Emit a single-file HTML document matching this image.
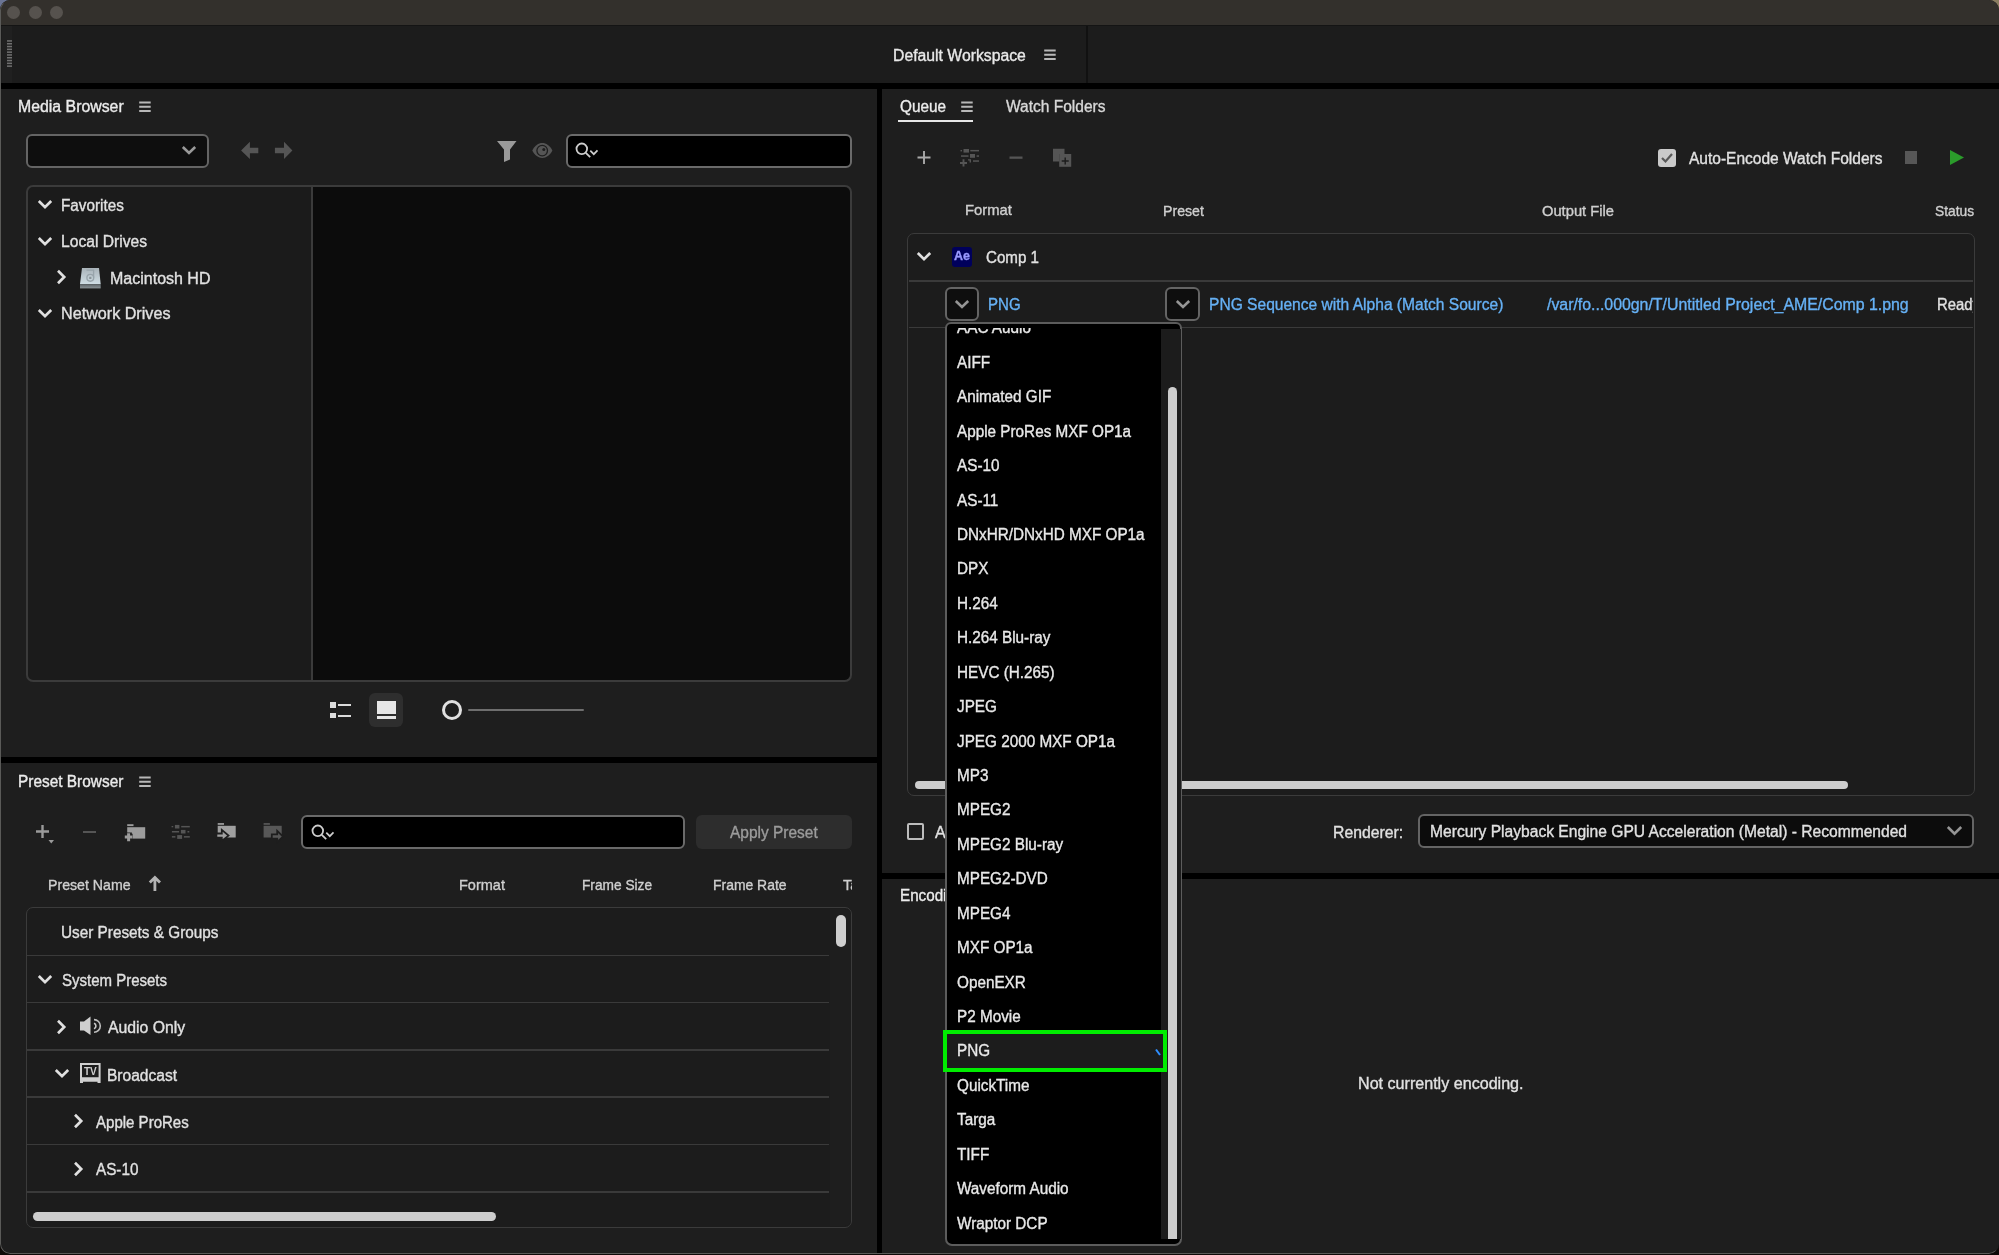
<!DOCTYPE html>
<html><head><meta charset="utf-8"><style>
html,body{margin:0;padding:0;width:1999px;height:1255px;overflow:hidden;background:#0e0a08;}
body{position:relative;font-family:"Liberation Sans",sans-serif;}
div,span,svg{position:absolute;}
span{white-space:nowrap;line-height:normal;transform-origin:0 0;-webkit-text-stroke:0.35px currentColor;}
#root{left:0;top:0;width:1999px;height:1254px;will-change:transform;border-radius:10px;overflow:hidden;}
</style></head><body>
<div style="left:0;top:0;width:12px;height:12px;background:#6a7494;"></div><div style="left:1987px;top:0;width:12px;height:12px;background:#8a7d60;"></div><div id="root">
<div style="left:0px;top:0px;width:1999px;height:1255px;background:#1e1e1e;"></div>
<div style="left:0px;top:0px;width:1999px;height:25px;background:#33302c;"></div>
<div style="left:0px;top:25px;width:1999px;height:1px;background:#141414;"></div>
<div style="left:7.0px;top:5.5px;width:13px;height:13px;border-radius:50%;background:#56524e;"></div>
<div style="left:28.5px;top:5.5px;width:13px;height:13px;border-radius:50%;background:#56524e;"></div>
<div style="left:50.0px;top:5.5px;width:13px;height:13px;border-radius:50%;background:#56524e;"></div>
<div style="left:0px;top:26px;width:1999px;height:57px;background:#1c1c1c;"></div>
<div style="left:2px;top:26px;width:10px;height:57px;background:#202020;"></div>
<svg style="left:6px;top:39px;" width="7" height="30" viewBox="0 0 7 30"><rect x="1" y="1.20" width="5" height="1.5" fill="#707070"/><rect x="1" y="4.00" width="5" height="1.5" fill="#707070"/><rect x="1" y="6.80" width="5" height="1.5" fill="#707070"/><rect x="1" y="9.60" width="5" height="1.5" fill="#707070"/><rect x="1" y="12.40" width="5" height="1.5" fill="#707070"/><rect x="1" y="15.20" width="5" height="1.5" fill="#707070"/><rect x="1" y="18.00" width="5" height="1.5" fill="#707070"/><rect x="1" y="20.80" width="5" height="1.5" fill="#707070"/><rect x="1" y="23.60" width="5" height="1.5" fill="#707070"/><rect x="1" y="26.40" width="5" height="1.5" fill="#707070"/></svg>
<span id="t1" style="left:893.0px;top:46.82px;font-size:16px;color:#e8e8e8;transform:scaleX(0.9851);">Default Workspace</span>
<svg style="left:1043px;top:48px;" width="14" height="14" viewBox="0 0 14 14"><path d="M1.2 2.6H12.7M1.2 6.85H12.7M1.2 11.1H12.7" stroke="#b8b8b8" stroke-width="2"/></svg>
<div style="left:1086px;top:26px;width:2px;height:57px;background:#111;"></div>
<div style="left:0px;top:83px;width:1999px;height:6px;background:#000;"></div>
<div style="left:877px;top:83px;width:5px;height:1170px;background:#000;"></div>
<div style="left:0px;top:757px;width:877px;height:6px;background:#000;"></div>
<div style="left:882px;top:873px;width:1117px;height:6px;background:#000;"></div>
<div style="left:0;top:0;width:1999px;height:1254px;box-sizing:border-box;border:1.5px solid #5a5a58;border-top-color:transparent;border-right-color:transparent;border-radius:10px;"></div>
<span id="t2" style="left:18.0px;top:98.22px;font-size:16px;color:#ececec;transform:scaleX(0.9906);">Media Browser</span>
<svg style="left:138px;top:100px;" width="14" height="13" viewBox="0 0 14 13"><path d="M1.2 2.6H12.7M1.2 6.85H12.7M1.2 11.1H12.7" stroke="#b8b8b8" stroke-width="2"/></svg>
<div style="left:26px;top:134px;width:183px;height:34px;box-sizing:border-box;border:2px solid #646464;border-radius:6px;background:#0e0e0e;"></div>
<svg style="left:181px;top:145px;" width="16" height="11" viewBox="0 0 16 11"><path d="M1.8 2L8 8L14.2 2" fill="none" stroke="#999" stroke-width="2.6"/></svg>
<svg style="left:235px;top:138px;" width="62" height="24" viewBox="235 138 62 24"><path d="M241.1 150.5L249.9 141.8V147.7H258.3V153.2H249.9V159Z M292.4 150.5L284 141.8V147.7H274.9V153.2H284V159Z" fill="#555"/></svg>
<svg style="left:496px;top:140px;" width="21" height="23" viewBox="0 0 21 23"><path d="M1 1H20.5L14 9.5V19.5L8 22V9.5Z" fill="#9a9a9a"/></svg>
<svg style="left:530px;top:140px;" width="26" height="22" viewBox="0 0 26 22"><path d="M2.3 10.6C7 0.6 17.5 0.6 22.4 10.6C17.5 20.4 7 20.4 2.3 10.6Z" fill="#555"/><circle cx="12.2" cy="10.6" r="5.3" fill="none" stroke="#1e1e1e" stroke-width="1.3"/><circle cx="13.8" cy="9.6" r="1.5" fill="#1e1e1e"/></svg>
<div style="left:565.5px;top:134px;width:286.5px;height:34px;box-sizing:border-box;border:2px solid #6a6a6a;border-radius:6px;background:#000;"></div>
<svg style="left:575px;top:142px;" width="25" height="18" viewBox="0 0 25 18"><circle cx="6.8" cy="6.8" r="5.3" fill="none" stroke="#cdcdcd" stroke-width="1.8"/><path d="M10.8 10.8L15.2 15.2" stroke="#cdcdcd" stroke-width="1.8"/><path d="M15.3 8.6L18.8 12.2L22.5 8.4" fill="none" stroke="#cdcdcd" stroke-width="1.7"/></svg>
<div style="left:25.5px;top:185px;width:826.5px;height:497px;box-sizing:border-box;border:2px solid #3b3b3b;border-radius:7px;background:#1b1b1b;overflow:hidden;"></div>
<div style="left:312px;top:187px;width:538px;height:493px;background:#0c0c0c;border-radius:0 6px 6px 0;"></div>
<div style="left:311px;top:186px;width:1.5px;height:494px;background:#3b3b3b;"></div>
<svg style="left:36.5px;top:199px;" width="16" height="11" viewBox="0 0 16 11"><path d="M1.8 2L8 8.2L14.2 2" fill="none" stroke="#e0e0e0" stroke-width="2.7"/></svg>
<span id="t3" style="left:61.0px;top:196.52px;font-size:16px;color:#e1e1e1;transform:scaleX(0.9538);">Favorites</span>
<svg style="left:36.5px;top:236px;" width="16" height="11" viewBox="0 0 16 11"><path d="M1.8 2L8 8.2L14.2 2" fill="none" stroke="#e0e0e0" stroke-width="2.7"/></svg>
<span id="t4" style="left:61.0px;top:233.22px;font-size:16px;color:#e1e1e1;transform:scaleX(0.9770);">Local Drives</span>
<svg style="left:56px;top:269px;" width="11" height="16" viewBox="0 0 11 16"><path d="M2 1.8L8.2 8L2 14.2" fill="none" stroke="#e0e0e0" stroke-width="2.7"/></svg>
<svg style="left:78px;top:265px;" width="25" height="26" viewBox="0 0 25 26"><defs><linearGradient id="hd" x1="0" y1="0" x2="0" y2="1"><stop offset="0" stop-color="#a9b3b9"/><stop offset="1" stop-color="#cfdde4"/></linearGradient><linearGradient id="hb" x1="0" y1="0" x2="0" y2="1"><stop offset="0" stop-color="#5d6468"/><stop offset="1" stop-color="#8a9296"/></linearGradient></defs><path d="M4 3H21L22.7 19.2H2Z" fill="url(#hd)"/><rect x="2" y="19.2" width="20.7" height="4.2" fill="url(#hb)"/><circle cx="12.3" cy="12.8" r="3.4" fill="none" stroke="#98a4ab" stroke-width="1.4"/><path d="M15.6 12.5V5.2H8.5M14.8 5.2" fill="none" stroke="#98a4ab" stroke-width="1.3"/><rect x="11.2" y="11.8" width="2.2" height="2.2" fill="#8a949a"/></svg>
<span id="t5" style="left:110.0px;top:269.52px;font-size:16px;color:#e1e1e1;transform:scaleX(1.0000);">Macintosh HD</span>
<svg style="left:36.5px;top:308px;" width="16" height="11" viewBox="0 0 16 11"><path d="M1.8 2L8 8.2L14.2 2" fill="none" stroke="#e0e0e0" stroke-width="2.7"/></svg>
<span id="t6" style="left:61.0px;top:305.12px;font-size:16px;color:#e1e1e1;transform:scaleX(1.0093);">Network Drives</span>
<div style="left:330px;top:702px;width:5.5px;height:5.5px;background:#dcdcdc;"></div>
<div style="left:337.5px;top:704px;width:13.5px;height:2.3px;background:#dcdcdc;"></div>
<div style="left:330px;top:712.5px;width:5.5px;height:5.5px;background:#dcdcdc;"></div>
<div style="left:337.5px;top:714.5px;width:13.5px;height:2.3px;background:#dcdcdc;"></div>
<div style="left:369px;top:693px;width:34px;height:34px;background:#2e2e2e;border-radius:6px;"></div>
<div style="left:377px;top:701px;width:18.5px;height:13px;background:#e6e6e6;"></div>
<div style="left:377px;top:716.3px;width:18.5px;height:3.2px;background:#e6e6e6;"></div>
<div style="left:442px;top:700px;width:20px;height:20px;box-sizing:border-box;border:3px solid #e0e0e0;border-radius:50%;"></div>
<div style="left:467.5px;top:709px;width:116.5px;height:2.4px;background:#6e6e6e;border-radius:1px;"></div>
<span id="t7" style="left:18.0px;top:773.02px;font-size:16px;color:#ececec;transform:scaleX(0.9633);">Preset Browser</span>
<svg style="left:138px;top:775px;" width="14" height="13" viewBox="0 0 14 13"><path d="M1.2 2.6H12.7M1.2 6.85H12.7M1.2 11.1H12.7" stroke="#b8b8b8" stroke-width="2"/></svg>
<svg style="left:35px;top:824px;" width="20" height="21" viewBox="0 0 20 21"><path d="M7.5 1V14M1 7.5H14" stroke="#9a9a9a" stroke-width="2.4"/><path d="M13.5 16H19L16.25 19.5Z" fill="#9a9a9a"/></svg>
<div style="left:82.5px;top:831px;width:13px;height:2.4px;background:#555;"></div>
<svg style="left:115px;top:815px;" width="180" height="35" viewBox="115 815 180 35"><g fill="#9c9c9c"><rect x="127.2" y="824.2" width="6.3" height="1.9"/><rect x="127.2" y="827.2" width="18" height="11.4"/></g><path d="M128.6 832.6V841.4M124.6 837H132.6" stroke="#1e1e1e" stroke-width="6.5"/><path d="M128.6 833.2V841.2M124.8 837H132.4" stroke="#9c9c9c" stroke-width="3"/><g fill="#555"><rect x="171.6" y="826" width="1.6" height="1.3"/><rect x="174.9" y="824.9" width="4.5" height="3.6"/><rect x="181.2" y="825.9" width="8.6" height="1.5"/><rect x="171.9" y="831" width="7.2" height="1.5"/><rect x="180.9" y="829.9" width="4.6" height="3.6"/><rect x="187.5" y="831" width="1.8" height="1.5"/><rect x="171.9" y="836.1" width="3.5" height="1.5"/><rect x="177.2" y="835.1" width="4.9" height="3.8"/><rect x="183.9" y="836.1" width="5.9" height="1.5"/></g><g fill="#a0a0a0"><rect x="217.7" y="823.1" width="6.3" height="1.7"/><rect x="217.7" y="825.8" width="18" height="11.7"/></g><path d="M216.4 833.5H221.8V829.9L228.5 835.6L221.8 841V837.6H216.4Z" fill="#a0a0a0" stroke="#1e1e1e" stroke-width="1.8" stroke-linejoin="miter"/><g fill="#585858"><rect x="263.6" y="823.1" width="6.3" height="1.7"/><rect x="263.6" y="825.8" width="18.1" height="11.7"/></g><path d="M271.8 834.4H277.2V830.8L283 836.6L277.2 842V838.6H271.8Z" fill="#585858" stroke="#1e1e1e" stroke-width="1.8"/></svg>
<div style="left:301px;top:815px;width:383.5px;height:34px;box-sizing:border-box;border:2px solid #6a6a6a;border-radius:6px;background:#000;"></div>
<svg style="left:311px;top:823.8px;" width="25" height="18" viewBox="0 0 25 18"><circle cx="6.8" cy="6.8" r="5.3" fill="none" stroke="#cdcdcd" stroke-width="1.8"/><path d="M10.8 10.8L15.2 15.2" stroke="#cdcdcd" stroke-width="1.8"/><path d="M15.3 8.6L18.8 12.2L22.5 8.4" fill="none" stroke="#cdcdcd" stroke-width="1.7"/></svg>
<div style="left:696px;top:815px;width:156px;height:34px;background:#2d2d2d;border-radius:6px;"></div>
<span id="t8" style="left:730.0px;top:823.52px;font-size:16px;color:#9c9c9c;transform:scaleX(0.9670);">Apply Preset</span>
<span id="t9" style="left:48.0px;top:877.28px;font-size:14.5px;color:#cfcfcf;transform:scaleX(0.9759);">Preset Name</span>
<svg style="left:147px;top:874px;" width="15" height="18" viewBox="0 0 15 18"><path d="M7.9 17V4M2.8 8.6L7.9 3.5L13 8.6" fill="none" stroke="#b4b4b4" stroke-width="2.8"/></svg>
<span id="t10" style="left:459.0px;top:877.28px;font-size:14.5px;color:#cfcfcf;transform:scaleX(1.0000);">Format</span>
<span id="t11" style="left:582.1px;top:877.28px;font-size:14.5px;color:#cfcfcf;transform:scaleX(0.9452);">Frame Size</span>
<span id="t12" style="left:713.0px;top:877.28px;font-size:14.5px;color:#cfcfcf;transform:scaleX(0.9600);">Frame Rate</span>
<div style="left:840px;top:870px;width:12px;height:26px;overflow:hidden;"><span style="left:3px;top:7.28px;font-size:14.5px;color:#cfcfcf;">Ta</span></div>
<div style="left:25.5px;top:907px;width:826.5px;height:321px;box-sizing:border-box;border:1.5px solid #3b3b3b;border-radius:7px;background:#1c1c1c;"></div>
<div style="left:829.5px;top:908.5px;width:21px;height:317px;background:#1e1e1e;border-radius:0 6px 6px 0;"></div>
<div style="left:836px;top:914.5px;width:9.5px;height:32px;background:#cfcfcf;border-radius:5px;"></div>
<div style="left:27px;top:954.5px;width:801.5px;height:1.5px;background:#3a3a3a;"></div>
<div style="left:27px;top:1001.5px;width:801.5px;height:1.5px;background:#3a3a3a;"></div>
<div style="left:27px;top:1049px;width:801.5px;height:1.5px;background:#3a3a3a;"></div>
<div style="left:27px;top:1096px;width:801.5px;height:1.5px;background:#3a3a3a;"></div>
<div style="left:27px;top:1143.5px;width:801.5px;height:1.5px;background:#3a3a3a;"></div>
<div style="left:27px;top:1191px;width:801.5px;height:1.5px;background:#3a3a3a;"></div>
<span id="t13" style="left:61.0px;top:923.52px;font-size:16px;color:#e1e1e1;transform:scaleX(0.9571);">User Presets &amp; Groups</span>
<svg style="left:36.5px;top:974px;" width="16" height="11" viewBox="0 0 16 11"><path d="M1.8 2L8 8.2L14.2 2" fill="none" stroke="#e0e0e0" stroke-width="2.7"/></svg>
<span id="t14" style="left:62.0px;top:971.52px;font-size:16px;color:#e1e1e1;transform:scaleX(0.9375);">System Presets</span>
<svg style="left:56px;top:1018.5px;" width="11" height="16" viewBox="0 0 11 16"><path d="M2 1.8L8.2 8L2 14.2" fill="none" stroke="#e0e0e0" stroke-width="2.7"/></svg>
<svg style="left:78px;top:1015px;" width="24" height="22" viewBox="0 0 24 22"><path d="M2 6.5H6L12.5 1.5V20L6 15.5H2Z" fill="#cfcfcf"/><path d="M16 8.2A3 3 0 0 1 16 13.8" fill="none" stroke="#c8c8c8" stroke-width="1.6"/><path d="M16 4.6A6.3 6.3 0 0 1 16 17.2" fill="none" stroke="#bdbdbd" stroke-width="1.6"/></svg>
<span id="t15" style="left:108.0px;top:1019.32px;font-size:16px;color:#e1e1e1;transform:scaleX(0.9873);">Audio Only</span>
<svg style="left:53.5px;top:1068px;" width="16" height="11" viewBox="0 0 16 11"><path d="M1.8 2L8 8.2L14.2 2" fill="none" stroke="#e0e0e0" stroke-width="2.7"/></svg>
<svg style="left:79px;top:1062px;" width="23" height="22" viewBox="0 0 23 22"><path fill-rule="evenodd" d="M1 1H21.6V21H18.5V19.8H4V21H1ZM3 3V15.3H19.6V3Z" fill="#cfcfcf"/><text x="11.3" y="13.2" text-anchor="middle" font-family="Liberation Sans" font-weight="bold" font-size="10" fill="#cfcfcf">TV</text></svg>
<span id="t16" style="left:107.0px;top:1066.52px;font-size:16px;color:#e1e1e1;transform:scaleX(0.9718);">Broadcast</span>
<svg style="left:73px;top:1113px;" width="11" height="16" viewBox="0 0 11 16"><path d="M2 1.8L8.2 8L2 14.2" fill="none" stroke="#e0e0e0" stroke-width="2.7"/></svg>
<span id="t17" style="left:96.0px;top:1113.92px;font-size:16px;color:#e1e1e1;transform:scaleX(0.9394);">Apple ProRes</span>
<svg style="left:73px;top:1160.5px;" width="11" height="16" viewBox="0 0 11 16"><path d="M2 1.8L8.2 8L2 14.2" fill="none" stroke="#e0e0e0" stroke-width="2.7"/></svg>
<span id="t18" style="left:96.0px;top:1161.02px;font-size:16px;color:#e1e1e1;transform:scaleX(0.9545);">AS-10</span>
<div style="left:33px;top:1212px;width:463px;height:9px;background:#cdcdcd;border-radius:5px;"></div>
<span id="t19" style="left:900.0px;top:98.02px;font-size:16px;color:#ececec;transform:scaleX(0.9583);">Queue</span>
<svg style="left:960px;top:100px;" width="14" height="13" viewBox="0 0 14 13"><path d="M1.2 2.6H12.7M1.2 6.85H12.7M1.2 11.1H12.7" stroke="#b8b8b8" stroke-width="2"/></svg>
<div style="left:898px;top:120px;width:75px;height:2.2px;background:#e6e6e6;"></div>
<span id="t20" style="left:1006.0px;top:98.02px;font-size:16px;color:#d8d8d8;transform:scaleX(0.9706);">Watch Folders</span>
<svg style="left:905px;top:140px;" width="180" height="30" viewBox="905 140 180 30"><path d="M917.5 157.5H930.5M924 151V164" stroke="#a9a9a9" stroke-width="1.9"/><g fill="#555"><rect x="960.5" y="150" width="1.5" height="1.4"/><rect x="963.5" y="149" width="5.5" height="3.6"/><rect x="970.3" y="149.9" width="8.7" height="1.5"/><rect x="961" y="155.3" width="7.5" height="1.5"/><rect x="970" y="154" width="5" height="3.8"/><rect x="976.6" y="155.3" width="2.4" height="1.5"/><rect x="973" y="160.3" width="6" height="1.5"/><path d="M968 159.2H971V162.5H969.6V160.6H968Z"/></g><path d="M963.5 159.3V166.5M960 163H967" stroke="#555" stroke-width="1.9"/><rect x="1009.5" y="156.5" width="13" height="2.3" fill="#555"/><path d="M1053 148.7H1064.5V154H1059.2V161.6H1053Z" fill="#555"/><rect x="1059.2" y="154" width="12" height="12.8" fill="#555"/><path d="M1065.2 157.5V164.5M1061.7 161H1068.7" stroke="#1c1c1c" stroke-width="1.4"/></svg>
<div style="left:1658px;top:149px;width:18px;height:18px;background:#cacaca;border-radius:3px;"></div>
<svg style="left:1658px;top:149px;" width="18" height="18" viewBox="0 0 18 18"><path d="M4 9L7.5 12.5L14 5" fill="none" stroke="#585858" stroke-width="2.2"/></svg>
<span id="t21" style="left:1689.0px;top:150.12px;font-size:16px;color:#e1e1e1;transform:scaleX(0.9698);">Auto-Encode Watch Folders</span>
<div style="left:1904.5px;top:151px;width:12.5px;height:12.5px;background:#575757;"></div>
<svg style="left:1949px;top:149px;" width="16" height="17" viewBox="0 0 16 17"><path d="M1 1L15 8.5L1 16Z" fill="#2b9b2b"/></svg>
<span id="t22" style="left:965.0px;top:202.48px;font-size:14.5px;color:#cfcfcf;transform:scaleX(1.0222);">Format</span>
<span id="t23" style="left:1163.0px;top:202.88px;font-size:14.5px;color:#cfcfcf;transform:scaleX(0.9756);">Preset</span>
<span id="t24" style="left:1542.0px;top:202.88px;font-size:14.5px;color:#cfcfcf;transform:scaleX(1.0141);">Output File</span>
<span id="t25" style="left:1935.0px;top:202.88px;font-size:14.5px;color:#cfcfcf;transform:scaleX(0.9512);">Status</span>
<div style="left:907px;top:232.5px;width:1067.5px;height:563px;box-sizing:border-box;border:1.5px solid #3b3b3b;border-radius:7px;background:#1c1c1c;"></div>
<div style="left:908.5px;top:280px;width:1064.5px;height:1.5px;background:#3a3a3a;"></div>
<div style="left:908.5px;top:326.5px;width:1064.5px;height:1.5px;background:#3a3a3a;"></div>
<svg style="left:916px;top:251px;" width="16" height="11" viewBox="0 0 16 11"><path d="M1.8 2L8 8.2L14.2 2" fill="none" stroke="#e0e0e0" stroke-width="2.7"/></svg>
<div style="left:951.5px;top:246.5px;width:20px;height:20px;background:#00005b;border-radius:3px;"></div>
<span style="left:952px;top:247px;width:20px;text-align:center;font-size:12.5px;line-height:19px;font-weight:bold;color:#9999ff;">Ae</span>
<span id="t26" style="left:986.0px;top:248.82px;font-size:16px;color:#e1e1e1;transform:scaleX(0.9464);">Comp 1</span>
<div style="left:944.5px;top:287px;width:34.5px;height:34px;box-sizing:border-box;border:2px solid #646464;border-radius:6px;background:#0e0e0e;"></div>
<svg style="left:953.5px;top:299px;" width="16" height="11" viewBox="0 0 16 11"><path d="M1.8 2L8 8L14.2 2" fill="none" stroke="#959595" stroke-width="2.6"/></svg>
<span id="t27" style="left:988.1px;top:295.52px;font-size:16px;color:#66b1f5;transform:scaleX(0.9394);">PNG</span>
<div style="left:1165px;top:287px;width:35px;height:34px;box-sizing:border-box;border:2px solid #646464;border-radius:6px;background:#0e0e0e;"></div>
<svg style="left:1174.5px;top:299px;" width="16" height="11" viewBox="0 0 16 11"><path d="M1.8 2L8 8L14.2 2" fill="none" stroke="#959595" stroke-width="2.6"/></svg>
<span id="t28" style="left:1209.0px;top:295.52px;font-size:16px;color:#66b1f5;transform:scaleX(0.9734);">PNG Sequence with Alpha (Match Source)</span>
<span id="t29" style="left:1547.0px;top:295.82px;font-size:16px;color:#66b1f5;transform:scaleX(0.9918);">/var/fo...000gn/T/Untitled Project_AME/Comp 1.png</span>
<div style="left:1930px;top:290px;width:43px;height:30px;overflow:hidden;"><span style="left:7px;top:5.82px;font-size:16px;color:#e1e1e1;transform:scaleX(0.93);">Ready</span></div>
<div style="left:915px;top:781px;width:932.5px;height:8px;background:#cdcdcd;border-radius:4px;"></div>
<div style="left:907px;top:822.5px;width:17px;height:17px;box-sizing:border-box;border:2px solid #bdbdbd;border-radius:2px;"></div>
<span id="t30" style="left:935px;top:824.12px;font-size:16px;color:#e1e1e1;">Auto</span>
<span id="t31" style="left:1333.0px;top:824.12px;font-size:16px;color:#e1e1e1;transform:scaleX(0.9855);">Renderer:</span>
<div style="left:1418px;top:814px;width:556px;height:33.5px;box-sizing:border-box;border:2px solid #646464;border-radius:6px;background:#0c0c0c;"></div>
<span id="t32" style="left:1430.0px;top:823.22px;font-size:16px;color:#e1e1e1;transform:scaleX(0.9754);">Mercury Playback Engine GPU Acceleration (Metal) - Recommended</span>
<svg style="left:1946px;top:825px;" width="17" height="11" viewBox="0 0 17 11"><path d="M1.8 2L8.5 8.7L15.2 2" fill="none" stroke="#959595" stroke-width="2.6"/></svg>
<span id="t33" style="left:900px;top:887.32px;font-size:16px;color:#ececec;transform:scaleX(0.95);">Encoding</span>
<span id="t34" style="left:1358.0px;top:1074.52px;font-size:16px;color:#e1e1e1;transform:scaleX(1.0061);">Not currently encoding.</span>
<div style="left:944.5px;top:322px;width:237.5px;height:924px;box-sizing:border-box;border:2px solid #5c5c5c;border-radius:0 0 7px 7px;background:#000;border-top-left-radius:6px;border-top-right-radius:6px;"></div>
<div style="left:1161px;top:329px;width:20px;height:910px;background:#1c1c1c;"></div>
<div style="left:1168px;top:387px;width:9px;height:852px;background:#cdcdcd;border-radius:4.5px 4.5px 0 0;"></div>
<div style="left:946.5px;top:328px;width:214.5px;height:914px;overflow:hidden;">
<span style="left:10.5px;top:-8.58px;font-size:16px;color:#e8e8e8;transform:scaleX(0.955);">AAC Audio</span>
<span style="left:10.5px;top:25.85px;font-size:16px;color:#e8e8e8;transform:scaleX(0.955);">AIFF</span>
<span style="left:10.5px;top:60.28px;font-size:16px;color:#e8e8e8;transform:scaleX(0.955);">Animated GIF</span>
<span style="left:10.5px;top:94.71px;font-size:16px;color:#e8e8e8;transform:scaleX(0.955);">Apple ProRes MXF OP1a</span>
<span style="left:10.5px;top:129.14px;font-size:16px;color:#e8e8e8;transform:scaleX(0.955);">AS-10</span>
<span style="left:10.5px;top:163.57px;font-size:16px;color:#e8e8e8;transform:scaleX(0.955);">AS-11</span>
<span style="left:10.5px;top:198.00px;font-size:16px;color:#e8e8e8;transform:scaleX(0.955);">DNxHR/DNxHD MXF OP1a</span>
<span style="left:10.5px;top:232.43px;font-size:16px;color:#e8e8e8;transform:scaleX(0.955);">DPX</span>
<span style="left:10.5px;top:266.86px;font-size:16px;color:#e8e8e8;transform:scaleX(0.955);">H.264</span>
<span style="left:10.5px;top:301.29px;font-size:16px;color:#e8e8e8;transform:scaleX(0.955);">H.264 Blu-ray</span>
<span style="left:10.5px;top:335.72px;font-size:16px;color:#e8e8e8;transform:scaleX(0.955);">HEVC (H.265)</span>
<span style="left:10.5px;top:370.15px;font-size:16px;color:#e8e8e8;transform:scaleX(0.955);">JPEG</span>
<span style="left:10.5px;top:404.58px;font-size:16px;color:#e8e8e8;transform:scaleX(0.955);">JPEG 2000 MXF OP1a</span>
<span style="left:10.5px;top:439.01px;font-size:16px;color:#e8e8e8;transform:scaleX(0.955);">MP3</span>
<span style="left:10.5px;top:473.44px;font-size:16px;color:#e8e8e8;transform:scaleX(0.955);">MPEG2</span>
<span style="left:10.5px;top:507.87px;font-size:16px;color:#e8e8e8;transform:scaleX(0.955);">MPEG2 Blu-ray</span>
<span style="left:10.5px;top:542.30px;font-size:16px;color:#e8e8e8;transform:scaleX(0.955);">MPEG2-DVD</span>
<span style="left:10.5px;top:576.73px;font-size:16px;color:#e8e8e8;transform:scaleX(0.955);">MPEG4</span>
<span style="left:10.5px;top:611.16px;font-size:16px;color:#e8e8e8;transform:scaleX(0.955);">MXF OP1a</span>
<span style="left:10.5px;top:645.59px;font-size:16px;color:#e8e8e8;transform:scaleX(0.955);">OpenEXR</span>
<span style="left:10.5px;top:680.02px;font-size:16px;color:#e8e8e8;transform:scaleX(0.955);">P2 Movie</span>
<div style="left:0px;top:702.5px;width:221px;height:41.5px;background:#1c1c1c;"></div>
<span style="left:10.5px;top:714.45px;font-size:16px;color:#e8e8e8;transform:scaleX(0.955);">PNG</span>
<span style="left:10.5px;top:748.88px;font-size:16px;color:#e8e8e8;transform:scaleX(0.955);">QuickTime</span>
<span style="left:10.5px;top:783.31px;font-size:16px;color:#e8e8e8;transform:scaleX(0.955);">Targa</span>
<span style="left:10.5px;top:817.74px;font-size:16px;color:#e8e8e8;transform:scaleX(0.955);">TIFF</span>
<span style="left:10.5px;top:852.17px;font-size:16px;color:#e8e8e8;transform:scaleX(0.955);">Waveform Audio</span>
<span style="left:10.5px;top:886.60px;font-size:16px;color:#e8e8e8;transform:scaleX(0.955);">Wraptor DCP</span>
</div>
<div style="left:942.5px;top:1030px;width:224.5px;height:42px;box-sizing:border-box;border:4px solid #00ec00;"></div>
<svg style="left:1154px;top:1048px;" width="8" height="10" viewBox="0 0 8 10"><path d="M2 1.5L6 7" stroke="#2f8fff" stroke-width="2"/></svg>
</div></body></html>
